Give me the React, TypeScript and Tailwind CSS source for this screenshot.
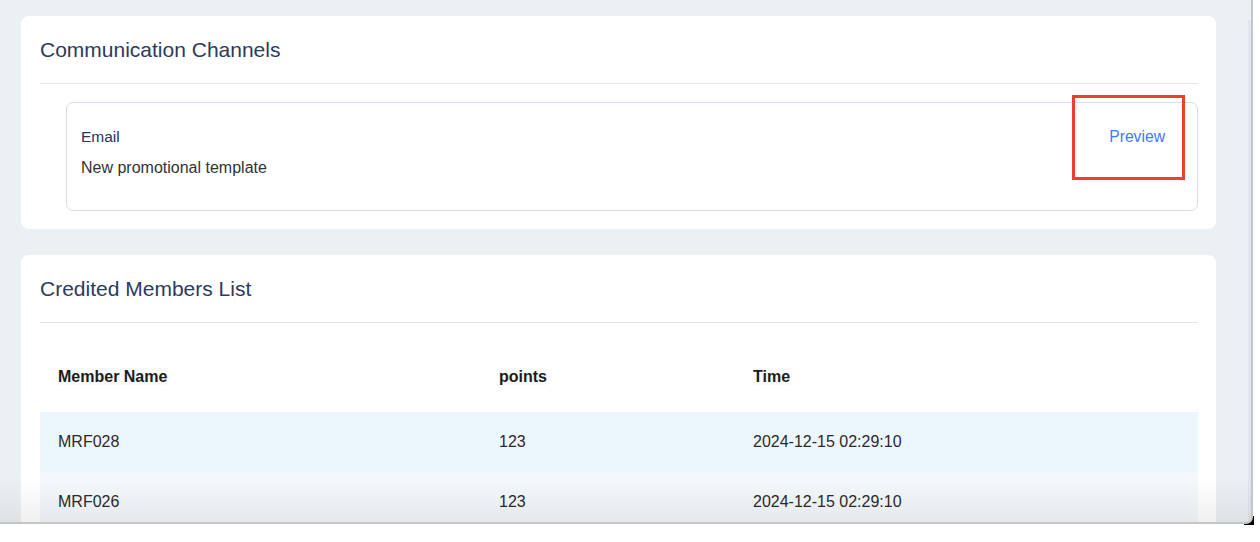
import React from "react";

const rows = [
  { name: "MRF028", points: "123", time: "2024-12-15 02:29:10", bg: "bg-[#ecf6fd]" },
  { name: "MRF026", points: "123", time: "2024-12-15 02:29:10", bg: "bg-[#f4f8fb]" },
];

export default function App() {
  return (
    <div
      className="relative w-[1260px] h-[542px] bg-white overflow-hidden"
      style={{ fontFamily: '"Liberation Sans", Arial, Helvetica, sans-serif' }}
    >
      <div className="absolute left-[1244px] top-[516px] w-[10px] h-[9px] bg-black" />
      <div className="relative w-[1253px] h-[524px] bg-[#ebf0f3] border-r-2 border-b-2 border-[#c6c6c6] rounded-br-[7px] overflow-hidden flex">
        <div className="flex-1 pl-[21px] pr-[32px] pt-[16px] flex flex-col gap-[26px]">
          {/* Card 1 */}
          <div className="relative bg-white rounded-[8px] px-[19px] pr-[18px] pb-[18px]">
            <div className="h-[68px] flex items-center border-b border-[#e3e5ea]">
              <h2 className="text-[21px] text-[#2c3a5e] leading-none">Communication Channels</h2>
            </div>
            <div className="mt-[18px] ml-[26px] h-[109px] border border-[#dcdaee] rounded-[7px] pl-[14px] pr-[32px] pt-[25px] flex justify-between">
              <div className="flex flex-col">
                <span className="text-[15.5px] leading-[18px] text-[#28345a]">Email</span>
                <span className="mt-[13px] text-[16px] leading-[18px] text-[#333333]">New promotional template</span>
              </div>
              <span className="text-[15.7px] leading-[18px] text-[#3b7cf3]">Preview</span>
            </div>
            <div className="absolute left-[1051px] top-[79px] w-[113px] h-[85px] border-[3px] border-[#ea4128]" />
          </div>

          {/* Card 2 */}
          <div className="flex-1 bg-white rounded-t-[8px] px-[19px] pr-[18px]">
            <div className="h-[68px] flex items-center border-b border-[#e3e5ea]">
              <h2 className="text-[21px] text-[#2c3a5e] leading-none">Credited Members List</h2>
            </div>
            <div className="mt-[19px]">
              <div className="grid grid-cols-[441px_254px_1fr] h-[70px] items-center text-[16px] font-bold text-[#1c1c1c]">
                <div className="pl-[18px]">
                  <span className="bg-[#f7f9fb]">Member Name</span>
                </div>
                <div className="pl-[18px]">
                  <span className="bg-[#f7f9fb]">points</span>
                </div>
                <div className="pl-[18px]">
                  <span className="bg-[#f7f9fb]">Time</span>
                </div>
              </div>
              {rows.map((r, i) => (
                <div
                  key={i}
                  className={`grid grid-cols-[441px_254px_1fr] h-[60px] items-center text-[16px] text-[#2a2a2a] ${r.bg}`}
                >
                  <div className="pl-[18px]">{r.name}</div>
                  <div className="pl-[18px]">{r.points}</div>
                  <div className="pl-[18px]">{r.time}</div>
                </div>
              ))}
            </div>
          </div>
        </div>
        <div className="w-[3px] mt-[20px] bg-[#e1e5ee]" />
        <div className="absolute left-0 right-0 bottom-0 h-[44px] bg-gradient-to-b from-transparent to-black/[0.06] pointer-events-none" />
      </div>
    </div>
  );
}
